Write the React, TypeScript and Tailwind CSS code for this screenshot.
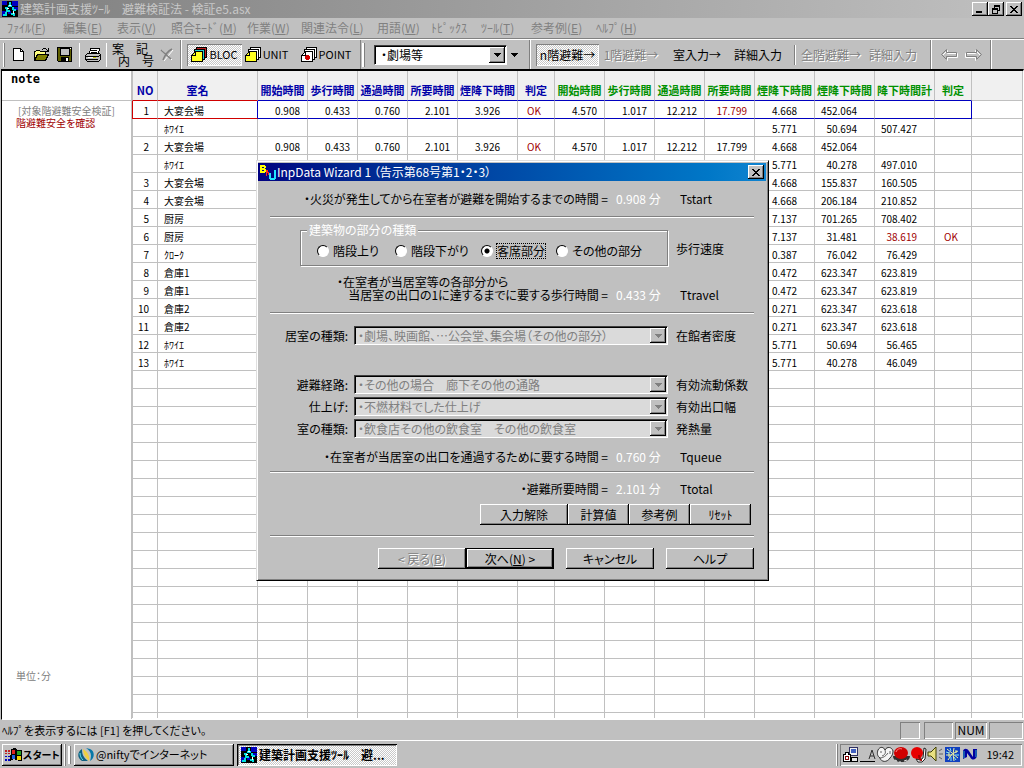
import { useState } from "react";
import type { ReactNode } from "react";

const raised = "bg-[#c0c0c0] shadow-[inset_-1px_-1px_0_#000,inset_1px_1px_0_#fff,inset_-2px_-2px_0_#808080]";
const sunken = "shadow-[inset_1px_1px_0_#808080,inset_-1px_-1px_0_#fff]";
const dither = "bg-[repeating-conic-gradient(#ffffff_0_25%,#c8c8c8_0_50%)] bg-[length:2px_2px]";
const embossed = "text-[#808080] [text-shadow:1px_1px_0_#fff]";

const menus = [
  { label: "ﾌｧｲﾙ", k: "F", w: "w-[56px]" },
  { label: "編集", k: "E", w: "w-[54px]" },
  { label: "表示", k: "V", w: "w-[54px]" },
  { label: "照合ﾓｰﾄﾞ", k: "M", w: "w-[76px]" },
  { label: "作業", k: "W", w: "w-[54px]" },
  { label: "関連法令", k: "L", w: "w-[76px]" },
  { label: "用語", k: "W", w: "w-[54px]" },
  { label: "ﾄﾋﾟｯｸｽ", k: "", w: "w-[50px]" },
  { label: "ﾂｰﾙ", k: "T", w: "w-[50px]" },
  { label: "参考例", k: "E", w: "w-[65px]" },
  { label: "ﾍﾙﾌﾟ", k: "H", w: "w-[54px]" },
];

const columns = [
  { title: "NO", w: "w-[26px]", cell: "text-right pr-2", head: "text-[#0000a8]" },
  { title: "室名", w: "w-[100px]", cell: "pl-1.5", head: "text-[#0000a8] pr-5" },
  { title: "開始時間", w: "w-[50px]", cell: "text-right pr-[7px]", head: "text-[#0000a8]" },
  { title: "歩行時間", w: "w-[50px]", cell: "text-right pr-[7px]", head: "text-[#0000a8]" },
  { title: "通過時間", w: "w-[50px]", cell: "text-right pr-[7px]", head: "text-[#0000a8]" },
  { title: "所要時間", w: "w-[50px]", cell: "text-right pr-[7px]", head: "text-[#0000a8]" },
  { title: "煙降下時間", w: "w-[60px]", cell: "text-right pr-[17px]", head: "text-[#0000a8]" },
  { title: "判定", w: "w-[37px]", cell: "text-center pr-1 text-[#a00000]", head: "text-[#0000a8]" },
  { title: "開始時間", w: "w-[50px]", cell: "text-right pr-[7px]", head: "text-[#009000]" },
  { title: "歩行時間", w: "w-[50px]", cell: "text-right pr-[7px]", head: "text-[#009000]" },
  { title: "通過時間", w: "w-[50px]", cell: "text-right pr-[7px]", head: "text-[#009000]" },
  { title: "所要時間", w: "w-[50px]", cell: "text-right pr-[7px]", head: "text-[#009000]" },
  { title: "煙降下時間", w: "w-[60px]", cell: "text-right pr-[17px]", head: "text-[#009000]" },
  { title: "煙降下時間", w: "w-[60px]", cell: "text-right pr-[17px]", head: "text-[#009000]" },
  { title: "降下時間計", w: "w-[60px]", cell: "text-right pr-[17px]", head: "text-[#009000]" },
  { title: "判定", w: "w-[37px]", cell: "text-center pr-1 text-[#a00000]", head: "text-[#009000]" },
  { title: "", w: "", cell: "", head: "" },
];

const blank = (n: number): string[] => Array(n).fill("");
const tail = (no: string, name: string, ...rest: string[]) => [no, name, ...blank(10), ...rest];

// a leading "!" marks a value shown in red
const data: string[][] = [
  ["1", "大宴会場", "0.908", "0.433", "0.760", "2.101", "3.926", "OK", "4.570", "1.017", "12.212", "!17.799", "4.668", "452.064"],
  tail("", "ﾎﾜｲｴ", "5.771", "50.694", "507.427"),
  ["2", "大宴会場", "0.908", "0.433", "0.760", "2.101", "3.926", "OK", "4.570", "1.017", "12.212", "17.799", "4.668", "452.064"],
  tail("", "ﾎﾜｲｴ", "5.771", "40.278", "497.010"),
  tail("3", "大宴会場", "4.668", "155.837", "160.505"),
  tail("4", "大宴会場", "4.668", "206.184", "210.852"),
  tail("5", "厨房", "7.137", "701.265", "708.402"),
  tail("6", "厨房", "7.137", "31.481", "!38.619", "OK"),
  tail("7", "ｸﾛｰｸ", "0.387", "76.042", "76.429"),
  tail("8", "倉庫1", "0.472", "623.347", "623.819"),
  tail("9", "倉庫1", "0.472", "623.347", "623.819"),
  tail("10", "倉庫2", "0.271", "623.347", "623.618"),
  tail("11", "倉庫2", "0.271", "623.347", "623.618"),
  tail("12", "ﾎﾜｲｴ", "5.771", "50.694", "56.465"),
  tail("13", "ﾎﾜｲｴ", "5.771", "40.278", "46.049"),
  ...Array.from({ length: 19 }, () => [] as string[]),
];

function AppIcon() {
  return (
    <svg width="16" height="16" viewBox="0 0 16 16" shapeRendering="crispEdges" className="shrink-0">
      <rect width="16" height="16" fill="#000" />
      <path d="M0 0h5v4H0zM10 0h6v5h-6zM0 10h4v5H0zM11 6h5v3h-5zM6 10h3v3H6z" fill="#0000c0" />
      <path d="M7 1h2v3h1v2H6V4h1zM3 6h3v3h2v2H5v2H3v-2h1V8H3zM10 6h2v2h2v2h-3V9h-1zM1 13h4v2H1zM9 12h4v3h-2v-1H9z" fill="#00e0e0" />
      <path d="M7 4h2v1H7zM5 7h2v1H5zM11 10h1v3h-1z" fill="#fff" />
    </svg>
  );
}

function NewIcon() {
  return (
    <svg width="13" height="15" viewBox="0 0 13 15" shapeRendering="crispEdges">
      <path d="M1.5 1.5h7l3 3v9h-10z" fill="#fff" stroke="#000" />
      <path d="M8.5 1.5v3h3" fill="none" stroke="#000" />
    </svg>
  );
}

function OpenIcon() {
  return (
    <svg width="17" height="15" viewBox="0 0 17 15" shapeRendering="crispEdges">
      <path d="M1.5 12.5v-8h1l1-1h3l1 1h5v3" fill="#ffff80" stroke="#000" />
      <path d="M1.5 13.5l3-6h11l-3 6z" fill="#808000" stroke="#000" />
      <path d="M9 2h1V1h3v1h1v1h1V1h1v4h-4V4h2V3h-1V2h-3v1H9z" fill="#000" />
    </svg>
  );
}

function SaveIcon() {
  return (
    <svg width="16" height="15" viewBox="0 0 16 15" shapeRendering="crispEdges">
      <path d="M.5.5h14v14h-13l-1-1z" fill="#606000" stroke="#000" />
      <path d="M3 1h9v7H3z" fill="#c0c0c0" stroke="#000" />
      <path d="M4 10h8v4H4z" fill="#000" />
      <path d="M9 11h2v3H9zM13 1h1v1h-1z" fill="#fff" />
    </svg>
  );
}

function PrintIcon() {
  return (
    <svg width="18" height="16" viewBox="0 0 18 16" shapeRendering="crispEdges">
      <path d="M5.5 7.5l1-6h9l-1 6z" fill="#fff" stroke="#000" />
      <path d="M7 3h6v1H7zM7 5h6v1H7z" fill="#000" />
      <path d="M1.5 8.5l2-2h12l1 1v5l-2 2h-11l-2-2z" fill="#c0c0c0" stroke="#000" />
      <path d="M2 9h12v1H2zM2 12h12v1H2zM14 9l2-2v1l-2 2z" fill="#000" />
      <path d="M4 10h8v1H4z" fill="#fff" />
      <path d="M9 10h3v1H9z" fill="#c0c000" />
    </svg>
  );
}

function DeleteIcon() {
  return (
    <svg width="14" height="15" viewBox="0 0 14 15">
      <path d="M2 3l10 10M13 3L4 14" stroke="#fff" strokeWidth="1" />
      <path d="M1 3l10 9M12 2C8 4 5 8 3 13" stroke="#808080" strokeWidth="1.5" fill="none" />
    </svg>
  );
}

function PagesIcon({ back, mid, front, dot }: { back: string; mid: string; front: string; dot?: boolean }) {
  return (
    <svg width="17" height="16" viewBox="0 0 17 16" shapeRendering="crispEdges" className="shrink-0">
      <path d="M5.5.5h10v10h-10z" fill={back} stroke="#000" />
      <path d="M3.5 2.5h10v10h-10z" fill={mid} stroke="#000" />
      <path d="M.5 8.5l4-4h7v10H.5z" fill={front} stroke="#000" />
      <path d="M.5 8.5h4v-4" fill="none" stroke="#000" />
      {dot && <path d="M5 8h3v1h1v3H8v1H5v-1H4V9h1z" fill="#d00000" />}
    </svg>
  );
}

function Arrow({ flip }: { flip?: boolean }) {
  return (
    <svg width="18" height="12" viewBox="0 0 18 12" className={flip ? "-scale-x-100" : ""}>
      <path d="M1.5 6.5l5-5v3h10v4h-10v3z" fill="none" stroke="#fff" />
      <path d="M.5 5.5l5-5v3h10v4h-10v3z" fill="none" stroke="#808080" />
    </svg>
  );
}

function Triangle({ color = "#000" }: { color?: string }) {
  return (
    <svg width="7" height="4" viewBox="0 0 7 4" shapeRendering="crispEdges">
      <path d="M0 0h7v1H6v1H5v1H4v1H3V3H2V2H1V1H0z" fill={color} />
    </svg>
  );
}

function CloseGlyph() {
  return (
    <svg width="8" height="7" viewBox="0 0 8 7" shapeRendering="crispEdges">
      <path d="M0 0h2v1h1v1h2V1h1V0h2v1H7v1H6v1H5v1h1v1h1v1h1v1H6V6H5V5H3v1H2v1H0V6h1V5h1V4h1V3H2V2H1V1H0z" fill="#000" />
    </svg>
  );
}

function WindowsLogo() {
  return (
    <svg width="18" height="15" viewBox="0 0 18 15" shapeRendering="crispEdges" className="shrink-0">
      <path d="M6 2l4-1 1 1 2 1h4v11h-3l-3-1-2-1-4 2z" fill="#000" />
      <path d="M7 3h3v4H7z" fill="#e02020" />
      <path d="M12 4h4v4h-4z" fill="#20a020" />
      <path d="M7 8h3v4H7z" fill="#2060e0" />
      <path d="M12 9h4v4h-4z" fill="#f0d000" />
      <path d="M0 3h2v2H0zM3 3h2v2H3zM0 6h2v1H0zM3 6h2v1H3z" fill="#c02020" />
      <path d="M0 9h2v1H0zM3 9h2v1H3zM0 12h2v2H0zM3 12h2v2H3z" fill="#0000c0" />
    </svg>
  );
}

function NiftyIcon() {
  return (
    <svg width="16" height="14" viewBox="0 0 16 14" className="shrink-0">
      <path d="M4 1C-1 4-1 10 4 13L10 13C5 9 4 6 4 1z" fill="#106080" />
      <path d="M5 1c0 5 3 9 6 12 1-4-1-9-6-12z" fill="#f0d040" />
      <path d="M8 0c5 3 6 7 4 13 5-3 5-10 0-12z" fill="#0878a8" />
      <path d="M2 5c0 3 1 5 3 7" stroke="#60e0f0" fill="none" />
    </svg>
  );
}

function WizardIcon() {
  return (
    <svg width="18" height="17" viewBox="0 0 18 17" shapeRendering="crispEdges">
      <path d="M1 1h5v1h1v2H6v1h1v3H6v1H1zM3 3v1h2V3zM3 6v1h2V6z" fill="#ffff00" fillRule="evenodd" />
      <path d="M7 6h2v2h1v2h1v3h-1v-2H9V9H8v3H7z" fill="#ff2020" />
      <path d="M10 9h2v5h3V6h2v9h-1v1h-5v-1h-1z" fill="#20e8ff" />
    </svg>
  );
}

function TrayIcons() {
  return (
    <svg width="138" height="18" viewBox="0 0 138 18" role="img" aria-label="タスクトレイ" className="shrink-0">
      <g shapeRendering="crispEdges">
        <path d="M7.5 1.5h8v8h-8z" fill="#f0f0f0" stroke="#303060" />
        <path d="M9 3h5v4H9z" fill="#4060c0" />
        <path d="M9.5 11.5h6v4h-6z" fill="#e8e8e8" stroke="#000" />
        <path d="M1.5 8.5h2v-2h3v2h2v7h-7z" fill="#fff" stroke="#000" />
        <path d="M3 10h4v4H3z" fill="#800000" />
        <path d="M4 11h2v2H4z" fill="#fff" />
        <path d="M18 15h15v1H18z" fill="#000" />
      </g>
      <path d="M27 13l3-9 3 9M28 10h4" stroke="#303030" fill="none" />
      <path d="M36 4c2-4 6-3 7 0 2-4 7-3 8 1 0 3-1 5-3 7-3 5-9 4-10 0-3-2-3-5-2-8z" fill="#f4f4f4" stroke="#303030" />
      <path d="M38 12c3 0 6-2 8-5M43 4c1 3 0 5-3 6M48 5v3M39 5v2" stroke="#606060" fill="none" />
      <path d="M51 10c0 8 17 8 17 0z" fill="#303030" />
      <path d="M53 14l2 1M57 16h2M62 15l3-1" stroke="#e0e0e0" />
      <ellipse cx="59" cy="7" rx="7" ry="6" fill="#d00000" />
      <path d="M54 6c1-3 4-4 6-3" stroke="#ff9090" fill="none" />
      <circle cx="75" cy="7" r="6" fill="#e80000" />
      <path d="M82 2l2 1-1 10-3 3h-4l-2-3 4 1 3-2z" fill="#fff" stroke="#202020" />
      <path d="M77 9c0 4 1 5 3 5" stroke="#a00000" strokeWidth="2" fill="none" />
      <path d="M86 6h3l5-5v14l-5-5h-3z" fill="#e8e080" stroke="#404000" />
      <path d="M97 5l3-2M97 8h4M97 11l3 2" stroke="#606060" />
      <path d="M103 1h15v15h-15z" fill="#1040c0" />
      <path d="M105 3l5 4M112 2l-1 6M116 5l-6 3M104 9l6 0M106 14l4-6M112 15l-1-7M116 12l-5-4M107 6v5M114 4v3" stroke="#f0f8a0" fill="none" />
      <path d="M104 6l3 1M108 2l1 3M117 9h-4M109 15v-4M114 14l-2-3" stroke="#80e8f8" fill="none" />
      <path d="M121 13V5c1-3 4-3 6 0l4 6V3h4v7c-1 4-5 5-7 1l-3-4v4z" fill="#0000a0" />
      <path d="M122 12V5M134 4v7" stroke="#30b0c0" fill="none" />
    </svg>
  );
}

function Separator() {
  return <div className="w-0.5 shrink-0 self-stretch border-l border-[#808080] bg-white" />;
}

function Key({ k }: { k: string }) {
  return (
    <>
      (<span className="underline">{k}</span>)
    </>
  );
}

function TitleBar() {
  return (
    <header className="flex h-[18px] items-center bg-linear-to-r from-[#808080] to-[#c0c0c0] pr-0.5 pl-0.5 text-[#c8c8c8]">
      <AppIcon />
      <h1 className="ml-0.5 flex-1 whitespace-pre text-xs leading-4">建築計画支援ﾂｰﾙ　避難検証法 - 検証e5.asx</h1>
      <button aria-label="最小化" className={`flex h-[14px] w-4 items-end pb-[3px] pl-1 ${raised}`}>
        <span className="h-0.5 w-1.5 bg-black" />
      </button>
      <button aria-label="元に戻す" className={`mr-0.5 flex h-[14px] w-4 items-center justify-center ${raised}`}>
        <svg width="9" height="9" viewBox="0 0 9 9" shapeRendering="crispEdges">
          <path d="M2 0h6v6H6V5h1V2H3v1H2z" fill="#000" />
          <path d="M0 3h6v6H0zM1 5v3h4V5z" fill="#000" fillRule="evenodd" />
        </svg>
      </button>
      <button aria-label="閉じる" className={`flex h-[14px] w-4 items-center justify-center ${raised}`}>
        <CloseGlyph />
      </button>
    </header>
  );
}

function MenuBar() {
  return (
    <nav className="flex h-[21px] items-center border-b border-[#808080] pl-[7px] text-xs leading-4 text-[#808080]">
      {menus.map((m) => (
        <button key={m.label} className={`${m.w} text-left whitespace-nowrap`}>
          {m.label}
          {m.k && <Key k={m.k} />}
        </button>
      ))}
    </nav>
  );
}

function ToolText({ children, className = "" }: { children: ReactNode; className?: string }) {
  return <button className={`flex h-[22px] items-center justify-center whitespace-nowrap text-xs ${className}`}>{children}</button>;
}

function StackedText({ top, bottom }: { top: string; bottom: string }) {
  return (
    <button aria-label={top + bottom} className="flex h-6 w-[18px] shrink-0 flex-col text-xs leading-3">
      <span className="self-start">{top}</span>
      <span className="self-end">{bottom}</span>
    </button>
  );
}

function Toolbar() {
  return (
    <div className="flex h-[30px] items-center border-t border-white text-black">
      <div className="ml-[3px] h-6 w-0.5 border-r border-[#808080] bg-white" />
      <div className="flex w-[68px] items-center justify-between pl-[7px]">
        <button aria-label="新規作成"><NewIcon /></button>
        <button aria-label="開く"><OpenIcon /></button>
        <button aria-label="上書き保存"><SaveIcon /></button>
      </div>
      <div className="flex w-[107px] items-center pl-1.5">
        <div className="mr-1 h-6 border-l border-white" />
        <button aria-label="印刷" className="mr-1"><PrintIcon /></button>
        <div className="mr-[5px] h-6 border-l border-white" />
        <StackedText top="案" bottom="内" />
        <div className="w-1.5" />
        <StackedText top="記" bottom="号" />
        <button aria-label="削除" className="ml-1.5"><DeleteIcon /></button>
      </div>
      <Separator />
      <ToolText className={`ml-[5px] w-[55px] gap-px ${sunken} ${dither}`}>
        <PagesIcon back="#c02020" mid="#20d0d0" front="#ffff20" />
        <span className="text-[11px]">BLOC</span>
      </ToolText>
      <ToolText className="ml-[3px] w-[43px] gap-px">
        <PagesIcon back="#fff" mid="#fff" front="#ffff20" />
        <span className="text-[11px]">UNIT</span>
      </ToolText>
      <ToolText className="ml-[13px] w-[50px] gap-px">
        <PagesIcon back="#fff" mid="#fff" front="#fff" dot />
        <span className="text-[11px]">POINT</span>
      </ToolText>
      <div className="ml-[9px] self-stretch border-l border-[#808080]" />
      <div className="ml-px h-6 w-[3px] border-r border-[#808080] bg-white" />
      <div className="relative ml-[9px] h-5 w-[133px] shrink-0">
        <select aria-label="用途" className="block h-5 w-full appearance-none border border-t-[#404040] border-r-white border-b-white border-l-[#404040] bg-white pl-1.5 text-xs leading-4 shadow-[inset_1px_1px_0_#000]">
          <option>・劇場等</option>
        </select>
        <span className={`pointer-events-none absolute top-0.5 right-0.5 flex h-4 w-4 items-center justify-center ${raised}`}>
          <Triangle />
        </span>
      </div>
      <button aria-label="一覧" className="ml-1"><Triangle /></button>
      <div className="ml-[11px] flex self-stretch"><Separator /></div>
      <ToolText className={`ml-[5px] w-[63px] ${sunken} ${dither}`}>n階避難→</ToolText>
      <ToolText className={`w-[64px] ${embossed}`}>1階避難→</ToolText>
      <ToolText className="ml-[5px] w-[58px]">室入力→</ToolText>
      <ToolText className="w-[64px]">詳細入力</ToolText>
      <div className="ml-1 h-5 w-0.5 border-l border-[#808080] bg-white" />
      <ToolText className={`ml-1 w-[62px] ${embossed}`}>全階避難→</ToolText>
      <ToolText className={`w-[62px] ${embossed}`}>詳細入力</ToolText>
      <div className="ml-1.5 flex self-stretch"><Separator /></div>
      <div className="flex w-[58px] justify-center gap-[5px]">
        <button aria-label="戻る"><Arrow /></button>
        <button aria-label="進む"><Arrow flip /></button>
      </div>
      <Separator />
    </div>
  );
}

function cellBorder(row: number, col: number) {
  // row -1 is the header: its lower edge is the upper edge of the selected row
  let bottom = "border-b-[#c0c0c0]";
  let right = "border-r-[#c0c0c0]";
  if (row < 1 && col < 16) bottom = col < 2 ? "border-b-[#d00000]" : "border-b-[#0000c0]";
  if (row === 0 && (col === 1 || col === 15)) right = "border-r-[#0000c0]";
  const left = col === 0 ? (row === 0 ? "border-l border-l-[#d00000]" : "border-l border-l-[#c0c0c0]") : "";
  return `border-r border-b ${bottom} ${right} ${left}`;
}

function ResultTable() {
  return (
    <table className="w-full table-fixed border-separate border-spacing-0 text-[10px] leading-3">
      <colgroup>
        {columns.map((c, i) => (
          <col key={i} className={c.w} />
        ))}
      </colgroup>
      <thead>
        <tr className="h-[30px] bg-[#f0f0f0]">
          {columns.map((c, i) => (
            <th key={i} className={`p-0 pt-2 text-[11px] leading-3 font-bold whitespace-nowrap ${c.head} ${cellBorder(-1, i)}`}>
              {c.title}
            </th>
          ))}
        </tr>
      </thead>
      <tbody>
        {data.map((row, r) => (
          <tr key={r} className="h-[18px]">
            {columns.map((c, i) => {
              const value = row[i] ?? "";
              const red = value.startsWith("!");
              return (
                <td key={i} className={`p-0 pt-[3px] whitespace-nowrap ${c.cell} ${red ? "text-[#a00000]" : ""} ${cellBorder(r, i)}`}>
                  {red ? value.slice(1) : value}
                </td>
              );
            })}
          </tr>
        ))}
        <tr className="h-[5px]">
          {columns.map((_, i) => (
            <td key={i} className={`border-r border-[#c0c0c0] p-0 ${i === 0 ? "border-l" : ""}`} />
          ))}
        </tr>
      </tbody>
    </table>
  );
}

function NotePanel() {
  return (
    <aside className="flex w-[130px] shrink-0 flex-col border-r border-[#c0c0c0] text-[10px] leading-3">
      <h2 className="h-[30px] border-b border-[#c0c0c0] pl-[9px] font-['DejaVu_Sans_Mono',monospace] text-xs leading-4 font-bold">note</h2>
      <p className="mt-1 pl-4 whitespace-nowrap text-[#808080]">[対象階避難安全検証]</p>
      <p className="pl-[14px] text-[#a00000]">階避難安全を確認</p>
      <p className="mt-auto pb-[37px] pl-[14px] text-[#808080]">単位：分</p>
    </aside>
  );
}

function Rule() {
  return <hr className="mx-3 h-0.5 border-t border-[#808080] bg-white" />;
}

function ResultRow({ text, value, code }: { text: string; value: string; code: string }) {
  return (
    <div className="grid grid-cols-[350px_68px_1fr] items-center leading-[13px]">
      <span className="text-right">{text} =</span>
      <span className="pl-2 text-white">{value} 分</span>
      <span className="pl-1">{code}</span>
    </div>
  );
}

function SelectRow({ id, label, value, note }: { id: string; label: string; value: string; note: string }) {
  return (
    <div className="flex h-[19px] items-center">
      <label htmlFor={id} className="w-[90px] text-right">{label}:</label>
      <div className="relative mr-2 ml-1.5 h-[19px] w-[314px]">
        <select
          id={id}
          disabled
          className="block h-[19px] w-full appearance-none border border-t-[#404040] border-r-white border-b-white border-l-[#404040] bg-[#dadada] pl-[3px] text-xs leading-4 text-[#808080] opacity-100 shadow-[inset_1px_1px_0_#000]"
        >
          <option>{value}</option>
        </select>
        <span className={`pointer-events-none absolute top-0.5 right-0.5 flex h-[15px] w-4 items-center justify-center ${raised}`}>
          <Triangle color="#808080" />
        </span>
      </div>
      <span>{note}</span>
    </div>
  );
}

const parts = [
  { label: "階段上り", w: "w-[78px]" },
  { label: "階段下がり", w: "w-[86px]" },
  { label: "客席部分", w: "w-[75px]" },
  { label: "その他の部分", w: "w-[90px]" },
];

function WizardDialog() {
  const [part, setPart] = useState("客席部分");

  return (
    <section
      role="dialog"
      aria-label="InpData Wizard 1"
      className="absolute top-[89px] left-[254px] w-[513px] border-t border-r border-b border-l border-t-[#dfdfdf] border-r-black border-b-black border-l-[#dfdfdf] bg-[#c0c0c0] pt-0.5 pr-0.5 pb-[11px] pl-px text-xs leading-[14px] shadow-[inset_1px_1px_0_#fff,inset_-1px_-1px_0_#808080]"
    >
      <div className="flex h-[18px] items-center bg-linear-to-r from-[#000080] to-[#1084d0] pr-0.5 pl-px text-white">
        <WizardIcon />
        <h2 className="flex-1 whitespace-nowrap">InpData Wizard 1 （告示第68号第1・2・3）</h2>
        <button aria-label="閉じる" className={`flex h-[14px] w-4 items-center justify-center ${raised}`}>
          <CloseGlyph />
        </button>
      </div>

      <div className="flex h-[35px] flex-col justify-center">
        <ResultRow text="・火災が発生してから在室者が避難を開始するまでの時間" value="0.908" code="Tstart" />
      </div>
      <Rule />

      <div className="mt-[5px] ml-[42px] flex items-center">
        <fieldset className="h-[43px] w-[368px] border border-[#808080] px-4 shadow-[1px_1px_0_#fff,inset_1px_1px_0_#fff]">
          <legend className="-ml-2.5 bg-[#c0c0c0] px-0.5 leading-[14px] text-white">建築物の部分の種類</legend>
          <div className="flex pt-[7px]">
            {parts.map((p) => (
              <label key={p.label} className={`flex items-center gap-1 whitespace-nowrap ${p.w}`}>
                <input
                  type="radio"
                  name="part"
                  checked={part === p.label}
                  onChange={() => setPart(p.label)}
                  className="h-3 w-3 shrink-0 appearance-none rounded-full border border-t-black border-r-white border-b-white border-l-black bg-white checked:bg-[radial-gradient(#000_0_2px,#fff_3px)]"
                />
                <span className={part === p.label ? "outline-1 outline-dotted outline-black" : ""}>{p.label}</span>
              </label>
            ))}
          </div>
        </fieldset>
        <span className="mt-2 ml-2">歩行速度</span>
      </div>

      <div className="mt-[9px] mb-[11px]">
        <p className="pl-[79px] leading-[13px]">・在室者が当居室等の各部分から</p>
        <ResultRow text="当居室の出口の1に達するまでに要する歩行時間" value="0.433" code="Ttravel" />
      </div>
      <Rule />

      <div className="mt-3">
        <SelectRow id="room" label="居室の種類" value="・劇場、映画館、…公会堂、集会場（その他の部分）" note="在館者密度" />
      </div>
      <div className="mt-[30px] mb-3 flex flex-col gap-[3px]">
        <SelectRow id="route" label="避難経路" value="・その他の場合　廊下その他の通路" note="有効流動係数" />
        <SelectRow id="finish" label="仕上げ" value="・不燃材料でした仕上げ" note="有効出口幅" />
        <SelectRow id="kind" label="室の種類" value="・飲食店その他の飲食室　その他の飲食室" note="発熱量" />
      </div>
      <ResultRow text="・在室者が当居室の出口を通過するために要する時間" value="0.760" code="Tqueue" />
      <div className="mt-2"><Rule /></div>
      <div className="mt-[9px] mb-[9px]">
        <ResultRow text="・避難所要時間" value="2.101" code="Ttotal" />
      </div>
      <div className="mb-2.5 flex justify-end pr-[15px]">
        <button className={`h-[21px] w-[88px] ${raised}`}>入力解除</button>
        <button className={`h-[21px] w-[61px] ${raised}`}>計算値</button>
        <button className={`h-[21px] w-[61px] ${raised}`}>参考例</button>
        <button className={`h-[21px] w-[61px] ${raised}`}>ﾘｾｯﾄ</button>
      </div>
      <Rule />
      <div className="mt-[11px] flex justify-end pr-3">
        <button disabled className={`h-[21px] w-[88px] ${raised} ${embossed}`}>
          &lt; 戻る<Key k="B" />
        </button>
        <button className={`h-[21px] w-[88px] border border-black ${raised}`}>
          次へ<Key k="N" /> &gt;
        </button>
        <button className={`ml-3 h-[21px] w-[88px] ${raised}`}>キャンセル</button>
        <button className={`ml-3 h-[21px] w-[88px] ${raised}`}>ヘルプ</button>
      </div>
    </section>
  );
}

function StatusBar() {
  return (
    <footer className="flex h-5 items-center gap-0.5 pr-px pl-0.5 text-xs leading-4">
      <span className="flex-1 text-[11px]">ﾍﾙﾌﾟを表示するには [F1] を押してください。</span>
      <span className={`mr-0.5 h-[17px] w-5 ${sunken}`} />
      <span className={`h-[17px] w-[29px] ${sunken}`} />
      <span className={`h-[17px] w-8 text-center ${sunken}`}>NUM</span>
      <span className={`h-[17px] w-[34px] ${sunken}`} />
    </footer>
  );
}

function Taskbar() {
  return (
    <div className="flex h-7 items-center border-t border-white px-0.5 text-xs">
      <button className={`flex h-[22px] w-[60px] items-center pl-[3px] text-[10px] font-bold whitespace-nowrap ${raised}`}>
        <WindowsLogo />
        スタート
      </button>
      <div className="ml-0.5 h-[22px] w-0.5 border-r border-[#808080] bg-white" />
      <div className="ml-0.5 h-[18px] w-[3px] border-r border-[#808080] bg-white" />
      <button className={`ml-[3px] flex h-[22px] w-[160px] items-center gap-0.5 pl-1 whitespace-nowrap ${raised}`}>
        <NiftyIcon />
        <span className="text-[11px]">@niftyでインターネット</span>
      </button>
      <button className={`ml-[3px] flex h-[22px] w-[160px] items-center gap-0.5 pl-1 font-bold whitespace-pre shadow-[inset_1px_1px_0_#000,inset_-1px_-1px_0_#fff,inset_2px_2px_0_#808080] ${dither}`}>
        <AppIcon />
        建築計画支援ﾂｰﾙ　避...
      </button>
      <div className="mr-0.5 ml-auto h-[22px] w-0.5 border-r border-[#808080] bg-white" />
      <div className={`flex h-[22px] w-[182px] items-center justify-between pr-2 pl-0.5 ${sunken}`}>
        <TrayIcons />
        <time className="text-[11px]">19:42</time>
      </div>
    </div>
  );
}

export default function App() {
  return (
    <div className="flex min-h-screen flex-col bg-[#c0c0c0] font-['Noto_Sans_CJK_JP',sans-serif] text-black [font-feature-settings:'palt']">
      <TitleBar />
      <MenuBar />
      <Toolbar />
      <main className="relative ml-px flex flex-1 border-t-2 border-r border-b border-l border-t-black border-r-white border-b-white border-l-black bg-white">
        <NotePanel />
        <div className="min-w-0 flex-1">
          <ResultTable />
        </div>
        <WizardDialog />
      </main>
      <StatusBar />
      <Taskbar />
    </div>
  );
}
